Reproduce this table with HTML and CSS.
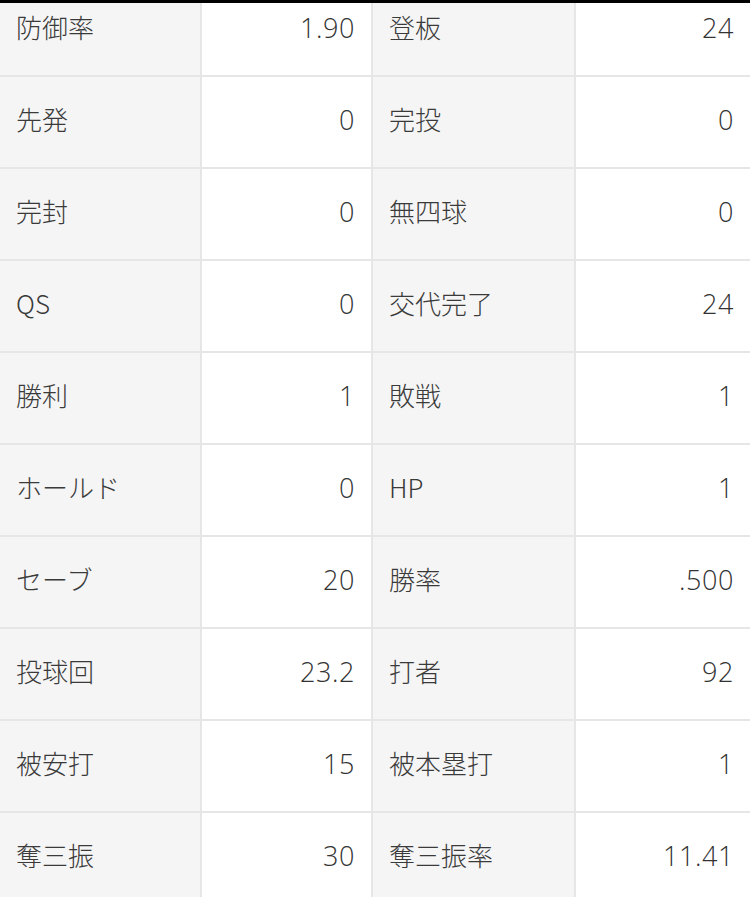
FILE: index.html
```html
<!DOCTYPE html>
<html lang="ja">
<head>
<meta charset="utf-8">
<link rel="stylesheet" href="styles.css">
</head>
<body>
<div class="topbar"></div>
<div class="viewport">
  <div class="stats">
    <div class="label">防御率</div><div class="value">1.90</div><div class="label">登板</div><div class="value">24</div>
    <div class="label">先発</div><div class="value">0</div><div class="label">完投</div><div class="value">0</div>
    <div class="label">完封</div><div class="value">0</div><div class="label">無四球</div><div class="value">0</div>
    <div class="label">QS</div><div class="value">0</div><div class="label">交代完了</div><div class="value">24</div>
    <div class="label">勝利</div><div class="value">1</div><div class="label">敗戦</div><div class="value">1</div>
    <div class="label">ホールド</div><div class="value">0</div><div class="label">HP</div><div class="value">1</div>
    <div class="label">セーブ</div><div class="value">20</div><div class="label">勝率</div><div class="value">.500</div>
    <div class="label">投球回</div><div class="value">23.2</div><div class="label">打者</div><div class="value">92</div>
    <div class="label">被安打</div><div class="value">15</div><div class="label">被本塁打</div><div class="value">1</div>
    <div class="label">奪三振</div><div class="value">30</div><div class="label">奪三振率</div><div class="value">11.41</div>
  </div>
</div>
</body>
</html>
```
FILE: styles.css
```css
html, body {
  margin: 0;
  padding: 0;
  background: #ffffff;
}
body {
  font-family: "Noto Sans CJK JP", "Noto Sans", sans-serif;
  color: #3a3a3a;
}
.topbar {
  height: 3px;
  background: #000;
}
.viewport {
  height: 894px;
  overflow: hidden;
}
.stats {
  margin-top: -18px;
  display: grid;
  grid-template-columns: 200px 169px 201px 1fr;
  grid-auto-rows: 90px;
  column-gap: 2px;
  row-gap: 2px;
  background: #e6e6e6;
  padding-bottom: 2px;
}
.label, .value {
  display: flex;
  align-items: center;
  font-size: 26px;
  font-weight: 300;
  line-height: 1;
  padding-bottom: 7px;
  box-sizing: border-box;
}
.label {
  background: #f5f5f5;
  padding-left: 16px;
}
.value {
  background: #ffffff;
  justify-content: flex-end;
  padding-right: 16px;
  padding-bottom: 5px;
  font-family: "Open Sans", "Noto Sans", sans-serif;
  font-size: 27px;
  letter-spacing: 0.6px;
  color: #333333;
}
```
